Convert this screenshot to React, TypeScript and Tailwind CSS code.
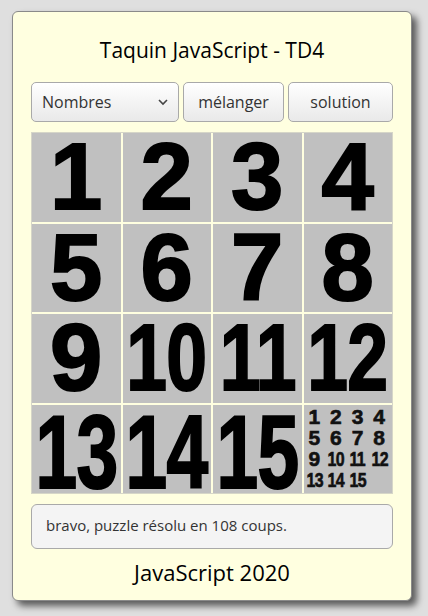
const tiles = [1, 2, 3, 4, 5, 6, 7, 8, 9, 10, 11, 12, 13, 14, 15];
const mini = [1, 2, 3, 4, 5, 6, 7, 8, 9, 10, 11, 12, 13, 14, 15, 0];

function Tile({ n, lastRow }: { n: number; lastRow: boolean }) {
  const two = n > 9;
  return (
    <div className="flex aspect-square items-center justify-center overflow-hidden bg-[#c0c0c0]">
      <span
        className={
          "block font-bold text-black leading-none [-webkit-text-stroke:2px_black] " +
          (two ? "scale-x-[0.78] tracking-[-1px] " : "") +
          (lastRow ? "translate-y-[3px] scale-y-[1.08] text-[96px]" : "text-[94px]")
        }
        style={{ fontFamily: '"Liberation Sans", Arial, sans-serif' }}
      >
        {n}
      </span>
    </div>
  );
}

function MiniTile() {
  return (
    <div className="grid aspect-square grid-cols-4 grid-rows-4 bg-[#c0c0c0] pl-0 pr-[2px] pt-[2px] pb-[3px]">
      {mini.map((n, i) => (
        <div
          key={i}
          className="flex items-center justify-center text-[21px] font-bold leading-none text-[#111] [-webkit-text-stroke:0.6px_#111]"
          style={{ fontFamily: '"Liberation Sans", Arial, sans-serif' }}
        >
          {n > 0 && (
            <span className={n > 9 ? "inline-block scale-x-[0.76] tracking-[-1px]" : ""}>{n}</span>
          )}
        </div>
      ))}
    </div>
  );
}

export default function App() {
  return (
    <div
      className="min-h-[616px] bg-[#dfdfdf] pt-[11px] pl-[12px]"
      style={{ fontFamily: '"Open Sans", "Noto Sans", sans-serif' }}
    >
      <div className="flex w-[400px] flex-col rounded-[6px] border border-[#8a8a8a] bg-[#ffffe0] px-[18px] pt-[24px] pb-[14px] shadow-[5px_5px_7px_rgba(0,0,0,0.6)]">
        <h1 className="h-[28px] text-center text-[21px] leading-[28px] text-black">
          Taquin JavaScript - TD4
        </h1>

        <div className="mt-[18px] flex h-[40px] gap-[4px]">
          <div className="relative flex w-[148px] items-center rounded-[5px] border border-[#a9a9a9] bg-gradient-to-b from-white to-[#e9e9e9] pl-[10px] text-[16px] text-[#333]">
            Nombres
            <svg
              className="absolute right-[10px] top-[16px]"
              width="10"
              height="7"
              viewBox="0 0 10 7"
              fill="none"
              stroke="#444"
              strokeWidth="1.6"
            >
              <path d="M1 1l4 4 4-4" />
            </svg>
          </div>
          <button className="w-[101px] rounded-[5px] border border-[#a9a9a9] bg-gradient-to-b from-white to-[#e9e9e9] text-[16px] text-[#333]">
            mélanger
          </button>
          <button className="flex-1 rounded-[5px] border border-[#a9a9a9] bg-gradient-to-b from-white to-[#e9e9e9] text-[16px] text-[#333]">
            solution
          </button>
        </div>

        <div className="mt-[10px] grid grid-cols-4 gap-[2px] border border-[#d6d6c8] bg-[#ffffe0]">
          {tiles.map((n) => (
            <Tile key={n} n={n} lastRow={n > 12} />
          ))}
          <MiniTile />
        </div>

        <div className="mt-[10px] h-[45px] rounded-[6px] border border-[#a9a9a9] bg-[#f4f4f4] pl-[14px] pt-[10px] text-[15px] leading-[20px] text-[#333]">
          bravo, puzzle résolu en 108 coups.
        </div>

        <p className="mt-[9px] h-[28px] text-center text-[22px] leading-[28px] text-black">
          JavaScript 2020
        </p>
      </div>
    </div>
  );
}
